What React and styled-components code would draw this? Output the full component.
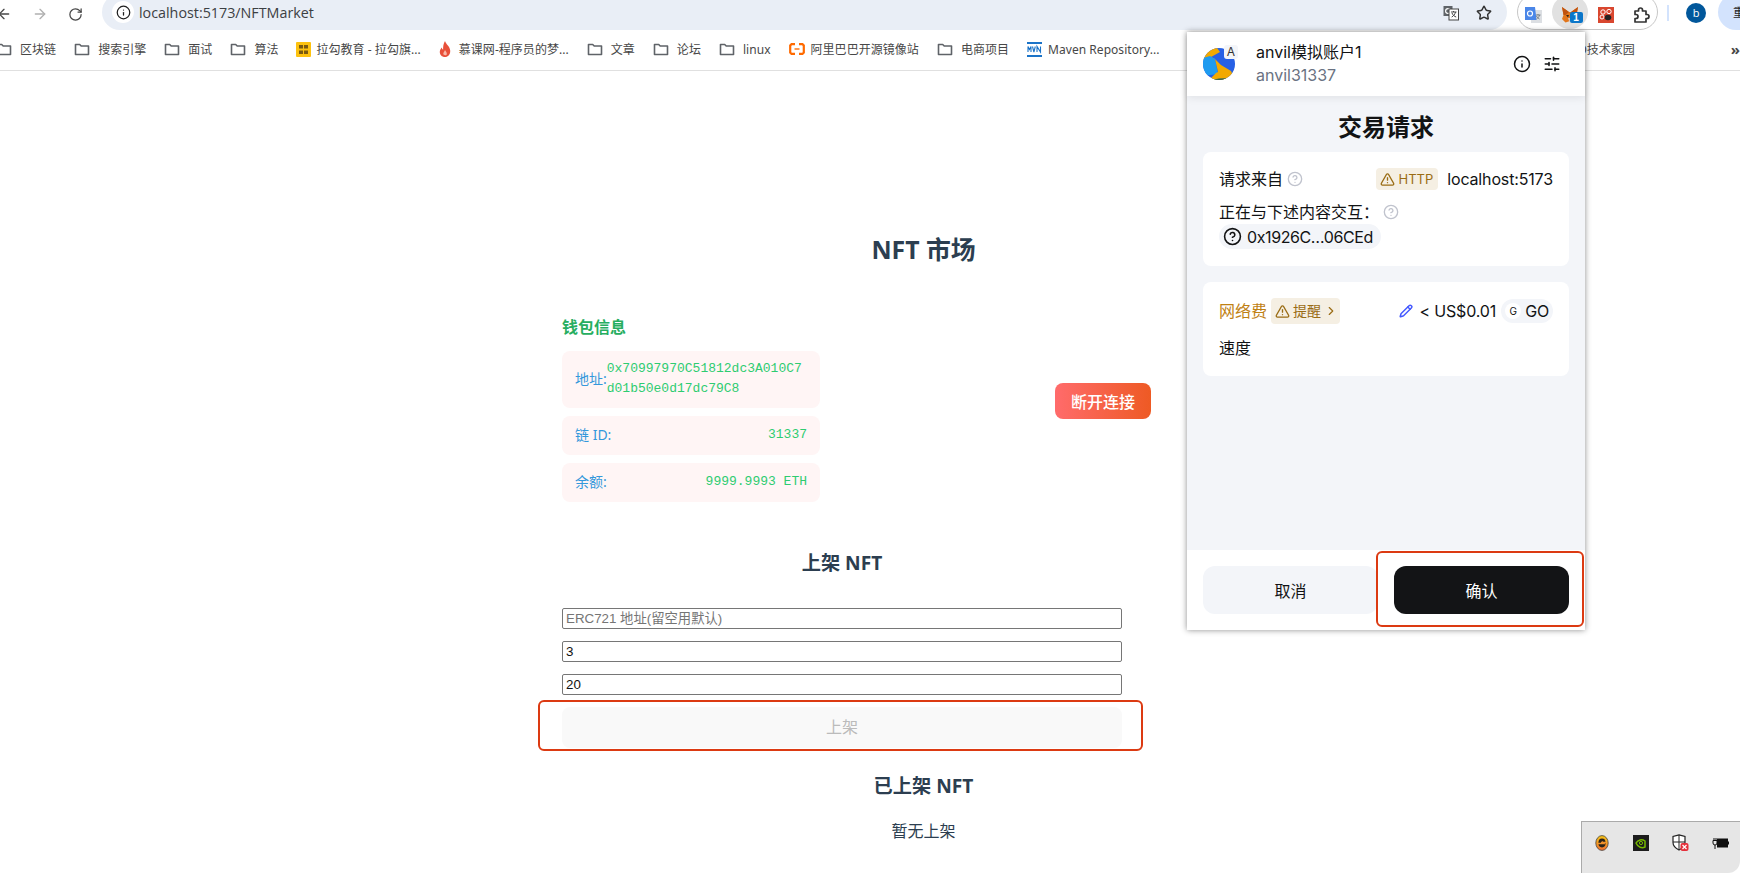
import styled, { createGlobalStyle } from 'styled-components';
import {
    ArrowLeft, ArrowRight, RotateCw, Info, Star, SlidersHorizontal,
    TriangleAlert, ChevronRight, CircleHelp, Pencil,
} from 'lucide-react';

const CJK = '"Noto Sans", "Noto Sans CJK SC", sans-serif';
const WALLET = 'Inter, "Noto Sans CJK SC", sans-serif';

const GlobalStyle = createGlobalStyle`
    html, body {
        margin: 0;
        height: 873px;
        overflow: hidden;
        background: #fff;
        font-family: ${CJK};
    }
    * { box-sizing: border-box; }
`

const Screen = styled.div`
    position: relative;
    width: 1740px;
    height: 873px;
    overflow: hidden;
`

/* browser chrome */
const Toolbar = styled.div`
    height: 30px;
    display: flex;
    align-items: flex-start;
    overflow: hidden;
    & > * { flex-shrink: 0; }
`

const NavButtons = styled.div`
    width: 102px;
    height: 28px;
    margin-left: -4px;
    display: flex;
    align-items: center;
    gap: 20px;
    color: #474747;
`

const AddressBar = styled.div`
    width: 1405px;
    margin-left: 4px;
    height: 36px;
    margin-top: -6px;
    padding: 0 15px 0 6px;
    border-radius: 18px;
    background: #e9eef6;
    display: flex;
    align-items: center;
`

const SiteInfo = styled.div`
    width: 22px;
    height: 22px;
    margin: 0 5px 0 4px;
    border-radius: 50%;
    background: #fff;
    display: flex;
    align-items: center;
    justify-content: center;
    color: #1f1f1f;
`

const UrlText = styled.span`
    font-size: 14.3px;
    color: #3c4043;
    font-family: "Open Sans", sans-serif;
`

const BarActions = styled.div`
    margin: 1px 0 0 auto;
    display: flex;
    align-items: center;
    gap: 17px;
    color: #333;
`

const ExtensionPill = styled.div`
    width: 141px;
    height: 36px;
    margin: -6px 0 0 10px;
    border: 1px solid #c7c7c7;
    border-radius: 18px;
    padding: 6px 0 0;
    display: flex;
    align-items: center;
    justify-content: center;
`

const ExtensionSlot = styled.div`
    position: relative;
    width: 36px;
    height: 34px;
    margin-top: -6px;
    padding-top: 6px;
    flex-shrink: 0;
    display: flex;
    align-items: center;
    justify-content: center;
    border-radius: 50%;
    background: ${props => props.$active ? '#e1e1e1' : 'transparent'};
`

const CountBadge = styled.span`
    position: absolute;
    left: 18px;
    top: 17px;
    width: 13px;
    height: 11px;
    border-radius: 2px;
    background: #0b76c9;
    color: #fff;
    font: bold 10px/11px "Liberation Sans", sans-serif;
    text-align: center;
`

const BarDivider = styled.div`
    width: 2px;
    height: 16px;
    margin: 5px 0 0 9px;
    background: #d3e3fd;
`

const ProfileAvatar = styled.div`
    width: 20px;
    height: 20px;
    margin: 3px 0 0 17px;
    border-radius: 50%;
    background: #01579b;
    color: #fff;
    font: 11px/20px "Open Sans", sans-serif;
    text-align: center;
`

const UpdateButton = styled.div`
    width: 22px;
    height: 36px;
    margin: -6px 0 0 12px;
    padding: 11px 0 0 15px;
    border-radius: 18px 0 0 18px;
    background: #d3e3fd;
    font-size: 12px;
    line-height: 16px;
    color: #1f1f1f;
    white-space: nowrap;
    overflow: hidden;
`

const BookmarkBar = styled.div`
    height: 41px;
    padding: 0 0 2px 0;
    margin-left: -4px;
    border-bottom: 1px solid #e0e0e0;
    display: flex;
    align-items: center;
    gap: 18px;
`

const Bookmark = styled.div`
    display: flex;
    align-items: center;
    gap: ${props => props.$gap || 8}px;
    font-size: 12px;
    letter-spacing: 0.04px;
    color: #474747;
    white-space: nowrap;
    flex-shrink: 0;
`

const BookmarkTail = styled.div`
    margin-left: auto;
    display: flex;
    align-items: center;
    gap: 96px;
    font-size: 12px;
    color: #474747;
`

const MoreMark = styled.span`
    font-size: 15px;
    font-weight: 700;
    line-height: 16px;
`

/* dapp page */
const Main = styled.main`
    width: 723px;
    margin-left: 562px;
    padding-top: 162px;
    color: #2c3e50;
`

const PageTitle = styled.h1`
    margin: 0;
    font-size: 24.8px;
    line-height: 32px;
    font-weight: 700;
    text-align: center;
`

const WalletRow = styled.section`
    width: 589px;
    margin-top: 35px;
    display: flex;
    align-items: center;
    justify-content: space-between;
`

const WalletColumn = styled.div`
    width: 258px;
    display: flex;
    flex-direction: column;
    gap: 8px;
`

const WalletHeading = styled.h3`
    margin: 15px 0 4px;
    font-size: 16px;
    line-height: 24px;
    font-weight: 700;
    color: #27ae60;
`

const InfoRow = styled.div`
    min-height: 39px;
    padding: 8.5px 13px;
    border-radius: 8px;
    background: #fff5f5;
    display: flex;
    align-items: center;
    justify-content: space-between;
`

const InfoLabel = styled.span`
    transform: translateY(-2px);
    font-size: 14px;
    color: #3498db;
    white-space: nowrap;
`

const InfoValue = styled.span`
    min-width: 0;
    transform: translateY(-1px);
    font: 13px/20px "Liberation Mono", monospace;
    color: #2ecc71;
    word-break: break-all;
`

const DisconnectButton = styled.button`
    width: 96px;
    height: 36px;
    border: none;
    border-radius: 8px;
    background: linear-gradient(90deg, #ff6b6b, #ee5a24);
    color: #fff;
    font-family: ${CJK};
    font-size: 16px;
    font-weight: 500;
    padding: 0;
    cursor: pointer;
`

const SectionTitle = styled.h2`
    margin: ${props => props.$top}px 0 0;
    font-size: 19.2px;
    line-height: 26px;
    font-weight: 700;
    text-align: center;
`

const ListForm = styled.form`
    width: 560px;
    margin-top: 48px;
`

const FormFields = styled.div`
    margin-top: 32px;
    display: flex;
    flex-direction: column;
    gap: 12px;
`

const TextField = styled.input`
    width: 100%;
    height: 21px;
    padding: 1px 3px;
    border: 1px solid #767676;
    border-radius: 2px;
    background: #fff;
    font: 13.33px "Liberation Sans", "Noto Sans CJK SC", sans-serif;
    color: #111;
    &::placeholder { color: #757575; }
`

const SubmitWrap = styled.div`
    position: relative;
`

const SubmitButton = styled.button`
    width: 100%;
    height: 41px;
    padding: 0 0 3px;
    border: none;
    border-radius: 8px;
    background: #f9f9f9;
    color: #bbb;
    font-family: ${CJK};
    font-size: 16px;
`

/* red annotation drawn over the screenshot */
const Highlight = styled.div`
    position: absolute;
    top: ${props => props.$top}px;
    left: ${props => props.$left}px;
    right: ${props => props.$right}px;
    bottom: ${props => props.$bottom}px;
    border: 2px solid #dc3a12;
    border-radius: 6px;
    pointer-events: none;
`

const EmptyText = styled.p`
    margin: 21px 0 0;
    font-size: 16px;
    line-height: 22px;
    text-align: center;
`

/* wallet popup */
const WalletPopup = styled.div`
    position: absolute;
    top: 32px;
    left: 1187px;
    width: 398px;
    height: 598px;
    display: flex;
    flex-direction: column;
    background: #f3f5f9;
    font-family: ${WALLET};
    color: #121314;
    box-shadow: 0 0 6px rgba(0, 0, 0, 0.45);
`

const PopupHeader = styled.header`
    height: 64px;
    padding: 0 24px 0 16px;
    background: #fff;
    display: flex;
    align-items: center;
    box-shadow: 0 2px 8px rgba(0, 0, 0, 0.08);
`

const AccountAvatar = styled.div`
    position: relative;
    width: 32px;
    height: 32px;
    margin: 0 21px 0 0;
    flex-shrink: 0;
`

const NetworkBadge = styled.span`
    position: absolute;
    top: -3px;
    right: -3px;
    width: 14px;
    height: 14px;
    border-radius: 3px;
    background: #f3f5f9;
    font-size: 12px;
    line-height: 14px;
    text-align: center;
    color: #333;
`

const AccountText = styled.div`
    margin-top: -2px;
    display: flex;
    flex-direction: column;
    gap: 3px;
    font-size: 16px;
    line-height: 20px;
`

const AccountSub = styled.span`
    color: #6a7282;
`

const HeaderActions = styled.div`
    margin-left: auto;
    display: flex;
    align-items: center;
    gap: 12px;
`

const PopupBody = styled.div`
    flex: 1;
    padding: 16px 16px 0;
    display: flex;
    flex-direction: column;
    gap: 16px;
`

const PopupTitle = styled.h2`
    margin: 0 0 -8px;
    font-size: 24px;
    line-height: 32px;
    font-weight: 700;
    text-align: center;
`

const Card = styled.div`
    padding: 16px 16px 17px;
    border-radius: 8px;
    background: #fff;
    display: flex;
    flex-direction: column;
    gap: ${props => props.$gap}px;
`

const CardRow = styled.div`
    min-height: 22px;
    display: flex;
    align-items: center;
    font-size: 16px;
    line-height: 22px;
`

const RowEnd = styled.div`
    margin-left: auto;
    display: flex;
    align-items: center;
    gap: ${props => props.$gap}px;
    letter-spacing: -0.15px;
`

const HelpIcon = styled(CircleHelp)`
    margin-left: 4px;
    color: #c0c3cd;
`

const WarningChip = styled.span`
    height: ${props => props.$height}px;
    padding: 0 5px 0 4px;
    border-radius: 4px;
    background: #f5efe3;
    color: #9a6c14;
    font-size: ${props => props.$size}px;
    letter-spacing: 0;
    display: inline-flex;
    align-items: center;
    gap: 3px;
`

const ChipChevron = styled(ChevronRight)`
    margin-right: -3px;
`

const AddressPill = styled.div`
    align-self: flex-start;
    height: 25px;
    margin-top: -10px;
    padding: 0 8px 0 4px;
    border-radius: 13px;
    background: #f3f5f9;
    display: flex;
    align-items: center;
    gap: 5px;
    font-size: 16px;
    letter-spacing: -0.4px;
`

const FeeLabel = styled.span`
    margin-right: 4px;
    color: #bf8113;
`

const FeeEdit = styled(Pencil)`
    margin-right: 1px;
    color: #4459ff;
`

const SpeedPill = styled.span`
    height: 24px;
    padding: 0 4px;
    border-radius: 12px;
    background: #f3f5f9;
    display: flex;
    align-items: center;
    gap: 4px;
`

const SpeedDot = styled.span`
    width: 16px;
    height: 16px;
    border-radius: 50%;
    background: #fff;
    font-size: 10px;
    line-height: 16px;
    text-align: center;
`

const PopupFooter = styled.footer`
    position: relative;
    height: 80px;
    padding: 16px;
    background: #fff;
    display: flex;
    gap: 16px;
`

const FooterButton = styled.button`
    flex: 1;
    height: 48px;
    border: none;
    border-radius: 12px;
    background: ${props => props.$primary ? '#131416' : '#f3f5f9'};
    color: ${props => props.$primary ? '#fff' : '#121314'};
    font-family: ${WALLET};
    font-size: 16px;
    font-weight: 400;
    cursor: pointer;
`

/* windows tray flyout */
const TrayFlyout = styled.div`
    position: absolute;
    right: 0;
    bottom: 0;
    width: 159px;
    height: 52px;
    padding: 0 0 10px 0;
    border-top: 1px solid #aaa;
    border-left: 1px solid #aaa;
    border-bottom-right-radius: 12px;
    background: #e6e6e6;
    display: flex;
    align-items: center;
`

const TraySlot = styled.div`
    width: 40px;
    display: flex;
    justify-content: center;
`

const FolderIcon = () => (
    <svg width="16" height="16" viewBox="0 0 16 16" fill="none" stroke="#5f6368" strokeWidth="1.6">
        <path d="M1.5 3.5h4.2l1.5 1.5h7.3v8.5h-13z" strokeLinejoin="round" />
    </svg>
);

const LagouIcon = () => (
    <svg width="15" height="15" viewBox="0 0 15 15">
        <rect width="15" height="15" rx="1" fill="#fdc20f" />
        <rect x="3" y="3" width="4" height="3.5" fill="#7a5a10" />
        <rect x="8" y="3" width="4" height="3.5" fill="#7a5a10" />
        <rect x="3" y="8.5" width="4" height="3.5" fill="#7a5a10" />
        <rect x="8" y="8.5" width="4" height="3.5" fill="#7a5a10" />
    </svg>
);

const FlameIcon = () => (
    <svg width="12" height="16" viewBox="0 0 12 16">
        <path d="M6 0c.6 3 4.8 5 5.2 9.500C11.500 13.500 9 16 6 16S.6 13.800.8 10.500C1 8.500 2 7.500 2.800 6.500c.2 1.200.7 1.800 1.300 2.200C4 5.500 4.500 2.500 6 0z" fill="#e8503a" />
        <path d="M6 9c.8 1.500 2 2.500 1.800 4.200C7.600 14.500 4.500 14.500 4.300 13 4.200 11.500 5.500 10.500 6 9z" fill="#f9b8a8" />
    </svg>
);

const AliIcon = () => (
    <svg width="16" height="12" viewBox="0 0 16 12" fill="none" stroke="#ff6a00" strokeWidth="2.200">
        <path d="M6 1.200H2.500L1.200 2.500v7l1.300 1.300H6M10 1.200h3.500l1.300 1.300v7l-1.300 1.300H10" />
        <path d="M5.500 6h5" strokeWidth="1.400" />
    </svg>
);

const MvnIcon = () => (
    <svg width="15" height="15" viewBox="0 0 15 15">
        <rect width="15" height="2" fill="#1a73c8" />
        <rect y="13" width="15" height="2" fill="#1a73c8" />
        <path d="M1 10V4.500l1.500 3 1.500-3V10M5.500 4.500l1.400 5.500 1.400-5.500M10 10V4.500l3.500 5.500V4.500" fill="none" stroke="#1a73c8" strokeWidth="1.100" />
    </svg>
);

const TranslateIcon = () => (
    <svg width="16" height="16" viewBox="0 0 16 16">
        <rect x="0.500" y="1" width="9" height="10" fill="#5f6368" />
        <circle cx="5" cy="6" r="2.400" fill="none" stroke="#fff" strokeWidth="1.200" />
        <rect x="6" y="4" width="9.500" height="11" fill="#fff" stroke="#444" />
        <path d="M8 7h5.500M10.500 6v1M12.500 7c-.6 2.500-2 4-3.800 5M9 8c.7 2 2.400 3.500 4.200 4" fill="none" stroke="#444" />
    </svg>
);

const GoogleTranslateIcon = () => (
    <svg width="17" height="17" viewBox="0 0 17 17">
        <rect x="6" y="3" width="11" height="13" fill="#dcdfe3" />
        <path d="M0 0h10l1.500 13H0z" fill="#4a86e8" />
        <circle cx="5" cy="6.500" r="2.500" fill="none" stroke="#fff" strokeWidth="1.200" />
        <path d="M11 8h4.500M13 7v1M14.500 8c-.5 2-1.500 3-3 4M11.500 9c.6 1.500 1.800 2.500 3 3" fill="none" stroke="#7a8087" />
    </svg>
);

const FoxIcon = () => (
    <svg width="18" height="17" viewBox="0 0 18 17">
        <path d="M1 0l7 5h2l7-5-1.500 8 1.500 4-3.500 3.500L9 14l-4.500 1.500L1 12l1.500-4z" fill="#e2761b" />
        <path d="M1 0l7 5-3.500 3-2 0zM17 0l-7 5 3.500 3 2 0z" fill="#c0530f" />
        <path d="M5 8h3l-1 2.500zM13 8h-3l1 2.500z" fill="#33251a" />
        <path d="M7 11h4l-1 3H8z" fill="#d7c1b3" />
    </svg>
);

const RedExtensionIcon = () => (
    <svg width="16" height="16" viewBox="0 0 16 16">
        <rect width="16" height="16" fill="#d9472f" />
        <circle cx="5" cy="5" r="2.200" fill="none" stroke="#fff" />
        <circle cx="11" cy="4.500" r="2.200" fill="none" stroke="#fff" />
        <circle cx="4" cy="10" r="2" fill="none" stroke="#fff" />
        <ellipse cx="10" cy="10.500" rx="3.300" ry="2.800" fill="#222" />
    </svg>
);

const PuzzleIcon = () => (
    <svg width="17" height="17" viewBox="0 0 17 17" fill="none" stroke="#333" strokeWidth="1.700" strokeLinejoin="round">
        <path d="M2 4h3.500V3a2 2 0 0 1 4 0v1H13v3.500h1a2 2 0 0 1 0 4h-1V15H2v-3.500h1a2 2 0 0 0 0-4H2z" />
    </svg>
);

const AccountPie = () => (
    <svg width="32" height="32" viewBox="0 0 32 32">
        <defs>
            <clipPath id="pie"><circle cx="16" cy="16" r="16" /></clipPath>
        </defs>
        <g clipPath="url(#pie)">
            <rect width="32" height="32" fill="#2760e5" />
            <path d="M0 0h14l3 4-9 5 4 2-12 1z" fill="#f2a900" />
            <path d="M0 10l7-2 5 3 3 15-15 2z" fill="#1e9bf0" />
            <path d="M6 32l7-7 2-1-3-13 6 6 10 6 4 9z" fill="#f2a900" />
            <path d="M8 32l8-1.500 12-.500-4 3z" fill="#27615a" />
        </g>
    </svg>
);

const CoinIcon = () => (
    <svg width="14" height="16" viewBox="0 0 14 16">
        <defs>
            <linearGradient id="coin" x1="0" y1="0" x2="0" y2="1">
                <stop offset="0" stopColor="#f6c416" />
                <stop offset="1" stopColor="#f0702f" />
            </linearGradient>
        </defs>
        <ellipse cx="7" cy="8" rx="6.200" ry="7.400" fill="url(#coin)" stroke="#444" strokeWidth="0.800" />
        <ellipse cx="7" cy="8" rx="3.600" ry="4.400" fill="#2a2218" />
        <path d="M3 8.500h6l-2-2M11 7.500H6" fill="none" stroke="#f0902a" strokeWidth="1.300" />
    </svg>
);

const NvidiaIcon = () => (
    <svg width="16" height="16" viewBox="0 0 16 16">
        <rect width="16" height="16" fill="#1c1c1c" />
        <path d="M3 8c2-3.500 6-4 9-2v6c-3 1.500-7 .500-9-4z" fill="none" stroke="#76b900" strokeWidth="1.500" />
        <circle cx="8" cy="8" r="1.600" fill="none" stroke="#76b900" />
    </svg>
);

const ShieldIcon = () => (
    <svg width="17" height="17" viewBox="0 0 17 17">
        <path d="M7 .8l6 1.700v6c0 3.500-3 6-6 7.500-3-1.500-6-4-6-7.500v-6z" fill="#fff" stroke="#222" strokeWidth="1.200" />
        <path d="M7 1v15M1 8h12" stroke="#222" />
        <rect x="8.500" y="9" width="8" height="8" rx="2" fill="#e5303b" />
        <path d="M10.500 11l4 4M14.500 11l-4 4" stroke="#fff" strokeWidth="1.200" />
    </svg>
);

const BatteryIcon = () => (
    <svg width="17" height="12" viewBox="0 0 17 12">
        <rect x="5.500" y="2" width="10" height="8" fill="#111" stroke="#111" />
        <rect x="16" y="4.500" width="1" height="3" fill="#111" />
        <path d="M1 3.500h4v2.500a2 2 0 0 1-4 0zM2 1v2.500M4 1v2.500M3 8v4" fill="none" stroke="#111" />
    </svg>
);

const bookmarks = [
    { text: '区块链' },
    { text: '搜索引擎' },
    { text: '面试' },
    { text: '算法' },
    { text: '拉勾教育 - 拉勾旗...', icon: <LagouIcon />, gap: 5 },
    { text: '慕课网-程序员的梦...', icon: <FlameIcon />, gap: 8 },
    { text: '文章' },
    { text: '论坛' },
    { text: 'linux' },
    { text: '阿里巴巴开源镜像站', icon: <AliIcon />, gap: 6 },
    { text: '电商项目' },
    { text: 'Maven Repository...', icon: <MvnIcon />, gap: 6 },
];

const walletInfo = [
    { label: '地址:', value: '0x70997970C51812dc3A010C7d01b50e0d17dc79C8' },
    { label: '链 ID:', value: '31337' },
    { label: '余额:', value: '9999.9993 ETH' },
];

const trayIcons = [<CoinIcon />, <NvidiaIcon />, <ShieldIcon />, <BatteryIcon />];

export default function App() {
    return (
        <Screen>
            <GlobalStyle />

            <Toolbar>
                <NavButtons>
                    <ArrowLeft size={16} />
                    <ArrowRight size={16} color="#b0b0b0" />
                    <RotateCw size={15} />
                </NavButtons>
                <AddressBar>
                    <SiteInfo><Info size={15} /></SiteInfo>
                    <UrlText>localhost:5173/NFTMarket</UrlText>
                    <BarActions>
                        <TranslateIcon />
                        <Star size={16} strokeWidth={2.2} />
                    </BarActions>
                </AddressBar>
                <ExtensionPill>
                    <ExtensionSlot><GoogleTranslateIcon /></ExtensionSlot>
                    <ExtensionSlot $active>
                        <FoxIcon />
                        <CountBadge>1</CountBadge>
                    </ExtensionSlot>
                    <ExtensionSlot><RedExtensionIcon /></ExtensionSlot>
                    <ExtensionSlot><PuzzleIcon /></ExtensionSlot>
                </ExtensionPill>
                <BarDivider />
                <ProfileAvatar>b</ProfileAvatar>
                <UpdateButton>重</UpdateButton>
            </Toolbar>

            <BookmarkBar>
                {bookmarks.map((item) => (
                    <Bookmark key={item.text} $gap={item.gap}>
                        {item.icon || <FolderIcon />}
                        {item.text}
                    </Bookmark>
                ))}
                <BookmarkTail>
                    <span>O技术家园</span>
                    <MoreMark>»</MoreMark>
                </BookmarkTail>
            </BookmarkBar>

            <Main>
                <PageTitle>NFT 市场</PageTitle>

                <WalletRow>
                    <WalletColumn>
                        <WalletHeading>钱包信息</WalletHeading>
                        {walletInfo.map((row) => (
                            <InfoRow key={row.label}>
                                <InfoLabel>{row.label}</InfoLabel>
                                <InfoValue>{row.value}</InfoValue>
                            </InfoRow>
                        ))}
                    </WalletColumn>
                    <DisconnectButton>断开连接</DisconnectButton>
                </WalletRow>

                <ListForm>
                    <SectionTitle $top={0}>上架 NFT</SectionTitle>
                    <FormFields>
                        <TextField placeholder="ERC721 地址(留空用默认)" readOnly />
                        <TextField value="3" readOnly />
                        <TextField value="20" readOnly />
                        <SubmitWrap>
                            <SubmitButton type="button" disabled>上架</SubmitButton>
                            <Highlight $top={-7} $left={-24} $right={-21} $bottom={-3} />
                        </SubmitWrap>
                    </FormFields>
                </ListForm>

                <SectionTitle $top={25}>已上架 NFT</SectionTitle>
                <EmptyText>暂无上架</EmptyText>
            </Main>

            <WalletPopup>
                <PopupHeader>
                    <AccountAvatar>
                        <AccountPie />
                        <NetworkBadge>A</NetworkBadge>
                    </AccountAvatar>
                    <AccountText>
                        <span>anvil模拟账户1</span>
                        <AccountSub>anvil31337</AccountSub>
                    </AccountText>
                    <HeaderActions>
                        <Info size={18} strokeWidth={2} />
                        <SlidersHorizontal size={18} strokeWidth={2} />
                    </HeaderActions>
                </PopupHeader>

                <PopupBody>
                    <PopupTitle>交易请求</PopupTitle>
                    <Card $gap={11}>
                        <CardRow>
                            请求来自
                            <HelpIcon size={16} />
                            <RowEnd $gap={9}>
                                <WarningChip $height={22} $size={13}>
                                    <TriangleAlert size={15} strokeWidth={2.2} />
                                    HTTP
                                </WarningChip>
                                localhost:5173
                            </RowEnd>
                        </CardRow>
                        <CardRow>
                            正在与下述内容交互：
                            <HelpIcon size={16} />
                        </CardRow>
                        <AddressPill>
                            <CircleHelp size={19} />
                            0x1926C…06CEd
                        </AddressPill>
                    </Card>
                    <Card $gap={13}>
                        <CardRow>
                            <FeeLabel>网络费</FeeLabel>
                            <WarningChip $height={26} $size={14}>
                                <TriangleAlert size={15} strokeWidth={2.2} />
                                提醒
                                <ChipChevron size={14} />
                            </WarningChip>
                            <RowEnd $gap={5}>
                                <FeeEdit size={14} strokeWidth={2.5} />
                                {'< US$0.01'}
                                <SpeedPill>
                                    <SpeedDot>G</SpeedDot>
                                    GO
                                </SpeedPill>
                            </RowEnd>
                        </CardRow>
                        <CardRow>速度</CardRow>
                    </Card>
                </PopupBody>

                <PopupFooter>
                    <FooterButton>取消</FooterButton>
                    <FooterButton $primary>确认</FooterButton>
                    <Highlight $top={1} $left={189} $right={1} $bottom={3} />
                </PopupFooter>
            </WalletPopup>

            <TrayFlyout>
                {trayIcons.map((icon, index) => (
                    <TraySlot key={'tray' + index}>{icon}</TraySlot>
                ))}
            </TrayFlyout>
        </Screen>
    );
}
